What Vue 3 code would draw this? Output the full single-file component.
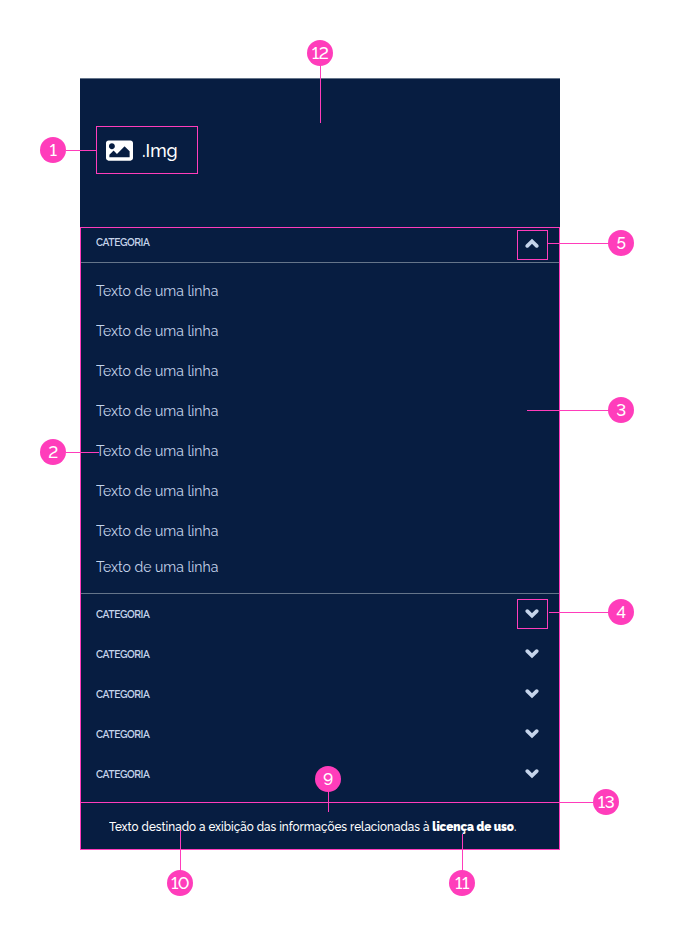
<script setup>
const links = Array.from({ length: 8 }, () => 'Texto de uma linha')
const closed = Array.from({ length: 5 }, () => 'CATEGORIA')

const boxes = [
  { x: 80, y: 227, w: 480, h: 623 },
  { x: 96, y: 126, w: 102, h: 48 },
  { x: 517, y: 230, w: 31, h: 30 },
  { x: 517, y: 599, w: 31, h: 30 },
]
const lines = [
  { x: 66, y: 150, w: 30, h: 1 },
  { x: 66, y: 452, w: 33, h: 1 },
  { x: 527, y: 410, w: 82, h: 1 },
  { x: 549, y: 612, w: 60, h: 1 },
  { x: 548, y: 243, w: 61, h: 1 },
  { x: 80, y: 802, w: 513, h: 1 },
  { x: 328, y: 791, w: 1, h: 21 },
  { x: 180, y: 830, w: 1, h: 41 },
  { x: 462, y: 834, w: 1, h: 37 },
  { x: 320, y: 65, w: 1, h: 58 },
]
const badges = [
  { n: 1, x: 53, y: 150 },
  { n: 2, x: 53, y: 452 },
  { n: 3, x: 621, y: 410 },
  { n: 4, x: 621, y: 612 },
  { n: 5, x: 621, y: 243 },
  { n: 9, x: 328, y: 778.5 },
  { n: 10, x: 180, y: 883 },
  { n: 11, x: 462, y: 883 },
  { n: 12, x: 320, y: 53 },
  { n: 13, x: 606, y: 802 },
]
const chevron = 'M2.3 5.1L7 9.7L11.7 5.1'
const rect = (r) => ({ left: r.x + 'px', top: r.y + 'px', width: r.w + 'px', height: r.h + 'px' })
</script>

<template>
  <main class="stage">
    <footer class="panel">
      <div class="brand">
        <svg class="picture" viewBox="0 0 512 512" aria-hidden="true">
          <path d="M464 448H48c-26.51 0-48-21.49-48-48V112c0-26.51 21.49-48 48-48h416c26.51 0 48 21.49 48 48v288c0 26.51-21.49 48-48 48zM112 120c-30.928 0-56 25.072-56 56s25.072 56 56 56 56-25.072 56-56-25.072-56-56-56zM64 384h384V272l-87.515-87.515c-4.686-4.686-12.284-4.686-16.971 0L208 320l-55.515-55.515c-4.686-4.686-12.284-4.686-16.971 0L64 336v48z" />
        </svg>
        <span class="brand-name narrow">.Img</span>
      </div>
      <section class="open">
        <header class="category head">
          <span class="label narrow">CATEGORIA</span>
          <svg class="chevron up" viewBox="0 0 14 16"><path :d="chevron" /></svg>
        </header>
        <ul class="links">
          <li v-for="(text, i) in links" :key="i"><span class="link narrow">{{ text }}</span></li>
        </ul>
      </section>
      <section class="closed">
        <div v-for="(name, i) in closed" :key="i" class="category">
          <span class="label narrow">{{ name }}</span>
          <svg class="chevron" viewBox="0 0 14 16"><path :d="chevron" /></svg>
        </div>
      </section>
      <p class="license"><span class="narrow">Texto destinado a exibição das informações relacionadas à <strong>licença de uso</strong>.</span></p>
    </footer>
    <div v-for="(b, i) in boxes" :key="'b' + i" class="outline" :style="rect(b)"></div>
    <div v-for="(l, i) in lines" :key="'l' + i" class="line" :style="rect(l)"></div>
    <div v-for="b in badges" :key="b.n" class="badge" :style="{ left: b.x + 'px', top: b.y + 'px' }">{{ b.n }}</div>
  </main>
</template>

<style>
body { background: #fff; }
</style>

<style scoped>
.stage {
  position: relative;
  box-sizing: border-box;
  width: 674px;
  height: 936px;
  padding: 78px 0 0 80px;
  overflow: hidden;
  font-family: Raleway, Lato, sans-serif;
  font-variant-numeric: lining-nums;
}
.panel {
  box-sizing: border-box;
  display: flex;
  flex-direction: column;
  width: 480px;
  height: 772px;
  border-top: 1px solid #65758a;
  background: #071d41;
  color: #c5d4eb;
}
.narrow {
  display: inline-block;
  transform: scaleX(0.935);
  transform-origin: left center;
}
.brand {
  box-sizing: border-box;
  display: flex;
  align-items: center;
  gap: 9px;
  height: 149px;
  padding: 0 26px 6px;
  color: #fff;
}
.picture { width: 27px; height: 27px; fill: currentColor; }
.brand-name {
  padding-bottom: 2px;
  font-size: 19px;
  line-height: 24px;
  font-weight: 500;
}
.category {
  box-sizing: border-box;
  display: flex;
  align-items: center;
  justify-content: space-between;
  height: 40px;
  padding: 0 21px 0 16px;
}
.head {
  height: 35px;
  padding-bottom: 5px;
  border-bottom: 1px solid #65758a;
}
.label { font-size: 11px; line-height: 16px; font-weight: 600; letter-spacing: -0.45px; }
.closed .label { padding-top: 2px; }
.chevron {
  width: 14px;
  height: 16px;
  fill: none;
  stroke: currentColor;
  stroke-width: 3.7;
  stroke-linecap: round;
}
.up { transform: rotate(180deg); }
.links {
  box-sizing: border-box;
  height: 331px;
  margin: 0;
  padding: 8px 16px 0;
  border-bottom: 1px solid #65758a;
  list-style: none;
}
.links li { display: flex; align-items: center; height: 40px; }
.links li:last-child { height: 32px; }
.link { font-size: 15px; line-height: 20px; }
.closed { height: 208px; }
.license {
  margin: 0;
  padding: 17px 0 0 29px;
  color: #fff;
  font-size: 12.5px;
  line-height: 16px;
  font-weight: 500;
  white-space: nowrap;
}
.license strong { font-weight: 900; letter-spacing: -0.1px; }
.outline { position: absolute; box-sizing: border-box; border: 1px solid #ff3dbb; }
.line { position: absolute; background: #ff3dbb; }
.badge {
  position: absolute;
  width: 26px;
  height: 26px;
  margin: -13px 0 0 -13px;
  border-radius: 50%;
  background: #ff3dbb;
  color: #fff;
  font-size: 17px;
  line-height: 26px;
  font-weight: 500;
  letter-spacing: -0.5px;
  text-align: center;
}
</style>
